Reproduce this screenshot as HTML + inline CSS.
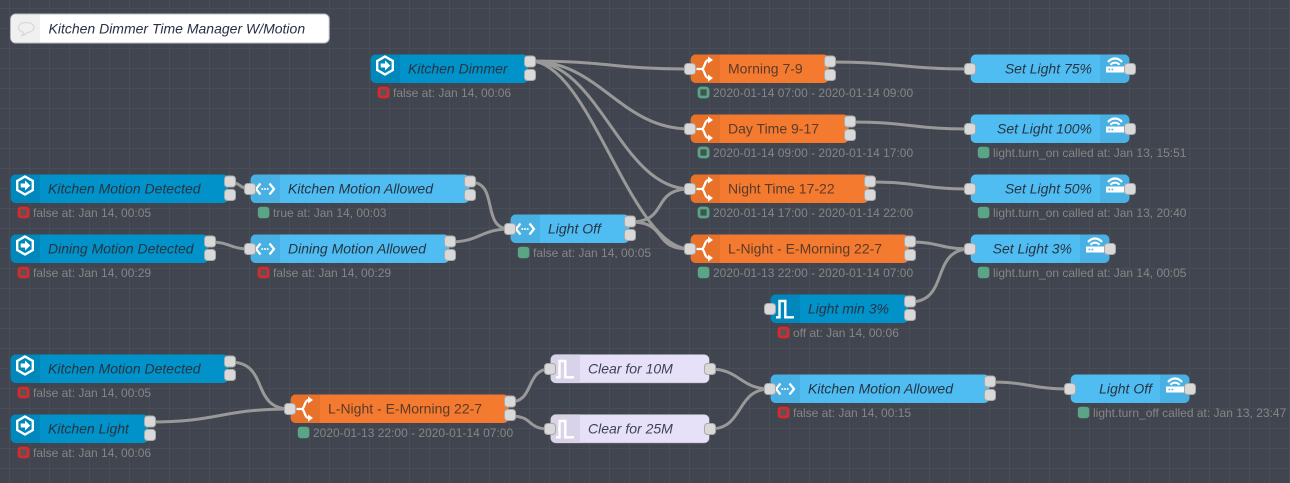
<!DOCTYPE html>
<html><head><meta charset="utf-8"><style>
html,body{margin:0;padding:0;background:#41454f;width:1290px;height:483px;overflow:hidden}
svg{display:block}
text{font-family:"Liberation Sans",Arial,sans-serif}
.l{font-size:14px;font-style:italic;fill:#263544}
.o{font-size:14px;fill:#5b3a2a}
.v{font-size:14px;font-style:italic;fill:#3f4358}
.s{font-size:12px;fill:#868686}
.w{fill:none;stroke:#999;stroke-width:3}
.db{fill:#0092c8}.dbs{fill:#0088bc}
.lb{fill:#4fbdf2}.lbs{fill:#49b0e3}
.or{fill:#f47a30}.ors{fill:#e8722a}
.la{fill:#e6e0f8}.las{fill:#d9d3ea}
</style></head><body>
<svg width="1290" height="483" viewBox="0 0 1290 483" xmlns="http://www.w3.org/2000/svg">
<defs>
<pattern id="g" x="9" y="8" width="20" height="20" patternUnits="userSpaceOnUse"><path d="M.5 0V20M0 .5H20" stroke="#494d58" fill="none"/></pattern>
<rect id="p" x="-5.500" y="-5.500" width="11" height="11" rx="3" fill="#d9d9d9" stroke="#aaa"/>
<path id="sl" d="M5.700 0H30V28.500H5.700a5 5 0 0 1-5-5V5a5 5 0 0 1 5-5z"/>
<path id="sr" d="M-30 0H-5.700a5 5 0 0 1 5 5V23.500a5 5 0 0 1-5 5H-30z"/>
<g id="trig"><path d="M15 2L22.800 6.500V15.500L15 20L7.200 15.500V6.500Z" fill="none" stroke="#fff" stroke-width="2.400"/><path d="M10.700 9H15V6L20.300 11L15 16V13H10.700Z" fill="#fff"/></g>
<g id="sw" fill="none" stroke="#fff" stroke-width="2.300"><path d="M6.500 14.500H11.500C15 14.500 14 5.500 19 5.500M11.500 14.500C15 14.500 14 23.500 19 23.500"/><path d="M18 2L23 5.500L18 9Z" fill="#fff" stroke="none"/><path d="M18 20L23 23.500L18 27Z" fill="#fff" stroke="none"/></g>
<g id="fn"><path d="M10.500 9L6 14.500L10.500 20M19.500 9L24 14.500L19.500 20" fill="none" stroke="#fff" stroke-width="2.200"/><circle cx="12.300" cy="14.500" r="1" fill="#fff"/><circle cx="15" cy="14.500" r="1" fill="#fff"/><circle cx="17.700" cy="14.500" r="1" fill="#fff"/></g>
<path id="bit" fill="none" stroke="#fff" stroke-width="2.400" d="M6 22.800H9.500V6.500H15.300V22.800H24"/>
<g id="sv"><path d="M-24 12h18v6h-18z" fill="#fff"/><path d="M-21.500 15h1.700M-18.500 15h1.700" stroke="#49b0e3" stroke-width="1.600"/><path d="M-22 7.500C-18 2.800 -12 2.800 -8 7.500M-19.500 10.300C-17 7.500 -13 7.500 -10.500 10.300" fill="none" stroke="#fff" stroke-width="2.200"/></g>
<rect id="rr" x="9" y="33.500" width="9" height="9" rx="2" fill="#555" stroke="#d8292d" stroke-width="2.800"/>
<rect id="gr" x="9" y="33.500" width="9" height="9" rx="2" fill="#41544f" stroke="#5aa585" stroke-width="2.800"/>
<rect id="gs" x="7.800" y="32.300" width="11.500" height="11.500" rx="3" fill="#5aa585"/>
</defs>
<rect width="1290" height="483" fill="#41454f"/>
<rect width="1290" height="483" fill="url(#g)"/>

<g class="w">
<path d="M530 61C610 61 610 69 690 69"/>
<path d="M530 61C600 61 620 129 690 129"/>
<path d="M530 61C600 61 620 189 690 189"/>
<path d="M530 61C590 61 630 249 690 249"/>
<path d="M230 182C240 182 240 189 250 189"/>
<path d="M210 242C230 242 230 249 250 249"/>
<path d="M470 182C500 182 480 229 510 229"/>
<path d="M450 242C480 242 480 229 510 229"/>
<path d="M630 222C670 222 650 189 690 189"/>
<path d="M630 222C670 222 650 249 690 249"/>
<path d="M830 62C900 62 900 69 970 69"/>
<path d="M850 122C910 122 910 129 970 129"/>
<path d="M870 182C920 182 920 189 970 189"/>
<path d="M910 242C940 242 940 249 970 249"/>
<path d="M910 302C950 302 930 249 970 249"/>
<path d="M230 362C270 362 250 409 290 409"/>
<path d="M150 422C220 422 220 409 290 409"/>
<path d="M510 402C535 402 525 369 550 369"/>
<path d="M510 416C535 416 525 429 550 429"/>
<path d="M710 369C740 369 740 389 770 389"/>
<path d="M710 429C745 429 735 389 770 389"/>
<path d="M990 382C1030 382 1030 389 1070 389"/>
</g>

<!-- comment -->
<g transform="translate(10,14)">
<rect x=".7" y="0" width="318.500" height="29" rx="5" fill="#fff" stroke="#b9bcc4"/>
<path d="M5.700 .5H30V28.500H5.700a5 5 0 0 1-5-5V5.500a5 5 0 0 1 5-5z" fill="#f0f0f0"/>
<path d="M15.500 8.500c5 0 8.500 2 8.500 5s-3.500 5-7 5c-1 1.500-3 2.700-5 3c1-1 1.500-2 1.500-3.300c-3-.7-5-2.500-5-4.700c0-3 3-5 7-5z" fill="none" stroke="#d9d9d9" stroke-width="1.300"/>
<text class="l" x="38.500" y="19.500" style="fill:#2a2f45">Kitchen Dimmer Time Manager W/Motion</text>
</g>

<!-- Kitchen Dimmer -->
<g transform="translate(370,54.500)"><rect class="db" x=".7" width="157.600" height="28.500" rx="5"/><use href="#sl" class="dbs"/><use href="#trig"/><text class="l" x="38" y="19">Kitchen Dimmer</text><use href="#p" x="160" y="7"/><use href="#p" x="160" y="20.500"/><use href="#rr"/><text class="s" x="23" y="42.500">false at: Jan 14, 00:06</text></g>
<!-- Morning -->
<g transform="translate(690,54.500)"><rect class="or" x=".7" width="138" height="28.500" rx="5"/><use href="#sl" class="ors"/><use href="#sw"/><text class="o" x="38" y="19">Morning 7-9</text><use href="#p" y="14.500"/><use href="#p" x="140" y="7"/><use href="#p" x="140" y="20.500"/><use href="#gr"/><text class="s" x="23" y="42.500">2020-01-14 07:00 - 2020-01-14 09:00</text></g>
<!-- Day -->
<g transform="translate(690,114.500)"><rect class="or" x=".7" width="158" height="28.500" rx="5"/><use href="#sl" class="ors"/><use href="#sw"/><text class="o" x="38" y="19">Day Time 9-17</text><use href="#p" y="14.500"/><use href="#p" x="160" y="7"/><use href="#p" x="160" y="20.500"/><use href="#gr"/><text class="s" x="23" y="42.500">2020-01-14 09:00 - 2020-01-14 17:00</text></g>
<!-- Night -->
<g transform="translate(690,174.500)"><rect class="or" x=".7" width="178" height="28.500" rx="5"/><use href="#sl" class="ors"/><use href="#sw"/><text class="o" x="38" y="19">Night Time 17-22</text><use href="#p" y="14.500"/><use href="#p" x="180" y="7"/><use href="#p" x="180" y="20.500"/><use href="#gr"/><text class="s" x="23" y="42.500">2020-01-14 17:00 - 2020-01-14 22:00</text></g>
<!-- L-Night -->
<g transform="translate(690,234.500)"><rect class="or" x=".7" width="218" height="28.500" rx="5"/><use href="#sl" class="ors"/><use href="#sw"/><text class="o" x="38" y="19">L-Night - E-Morning 22-7</text><use href="#p" y="14.500"/><use href="#p" x="220" y="7"/><use href="#p" x="220" y="20.500"/><use href="#gs"/><text class="s" x="23" y="42.500">2020-01-13 22:00 - 2020-01-14 07:00</text></g>

<!-- Set Light -->
<g transform="translate(970,54.500)"><rect class="lb" x=".7" width="158.600" height="28.500" rx="5"/><g transform="translate(160,0)"><use href="#sr" class="lbs"/><use href="#sv"/></g><text class="l" x="122" y="19" text-anchor="end">Set Light 75%</text><use href="#p" y="14.500"/><use href="#p" x="160" y="14.500"/></g>
<g transform="translate(970,114.500)"><rect class="lb" x=".7" width="158.600" height="28.500" rx="5"/><g transform="translate(160,0)"><use href="#sr" class="lbs"/><use href="#sv"/></g><text class="l" x="122" y="19" text-anchor="end">Set Light 100%</text><use href="#p" y="14.500"/><use href="#p" x="160" y="14.500"/><use href="#gs"/><text class="s" x="23" y="42.500">light.turn_on called at: Jan 13, 15:51</text></g>
<g transform="translate(970,174.500)"><rect class="lb" x=".7" width="158.600" height="28.500" rx="5"/><g transform="translate(160,0)"><use href="#sr" class="lbs"/><use href="#sv"/></g><text class="l" x="122" y="19" text-anchor="end">Set Light 50%</text><use href="#p" y="14.500"/><use href="#p" x="160" y="14.500"/><use href="#gs"/><text class="s" x="23" y="42.500">light.turn_on called at: Jan 13, 20:40</text></g>
<g transform="translate(970,234.500)"><rect class="lb" x=".7" width="138.600" height="28.500" rx="5"/><g transform="translate(140,0)"><use href="#sr" class="lbs"/><use href="#sv"/></g><text class="l" x="102" y="19" text-anchor="end">Set Light 3%</text><use href="#p" y="14.500"/><use href="#p" x="140" y="14.500"/><use href="#gs"/><text class="s" x="23" y="42.500">light.turn_on called at: Jan 14, 00:05</text></g>

<!-- Light min -->
<g transform="translate(770,294.500)"><rect class="db" x=".7" width="137.600" height="28.500" rx="5"/><use href="#sl" class="dbs"/><use href="#bit"/><text class="l" x="38" y="19">Light min 3%</text><use href="#p" y="14.500"/><use href="#p" x="140" y="7"/><use href="#p" x="140" y="20.500"/><use href="#rr"/><text class="s" x="23" y="42.500">off at: Jan 14, 00:06</text></g>

<!-- Left rows -->
<g transform="translate(10,174.500)"><rect class="db" x=".7" width="217.600" height="28.500" rx="5"/><use href="#sl" class="dbs"/><use href="#trig"/><text class="l" x="38" y="19">Kitchen Motion Detected</text><use href="#p" x="220" y="7"/><use href="#p" x="220" y="20.500"/><use href="#rr"/><text class="s" x="23" y="42.500">false at: Jan 14, 00:05</text></g>
<g transform="translate(10,234.500)"><rect class="db" x=".7" width="197.600" height="28.500" rx="5"/><use href="#sl" class="dbs"/><use href="#trig"/><text class="l" x="38" y="19">Dining Motion Detected</text><use href="#p" x="200" y="7"/><use href="#p" x="200" y="20.500"/><use href="#rr"/><text class="s" x="23" y="42.500">false at: Jan 14, 00:29</text></g>
<g transform="translate(250,174.500)"><rect class="lb" x=".7" width="218.600" height="28.500" rx="5"/><use href="#sl" class="lbs"/><use href="#fn"/><text class="l" x="38" y="19">Kitchen Motion Allowed</text><use href="#p" y="14.500"/><use href="#p" x="220" y="7"/><use href="#p" x="220" y="20.500"/><use href="#gs"/><text class="s" x="23" y="42.500">true at: Jan 14, 00:03</text></g>
<g transform="translate(250,234.500)"><rect class="lb" x=".7" width="198.600" height="28.500" rx="5"/><use href="#sl" class="lbs"/><use href="#fn"/><text class="l" x="38" y="19">Dining Motion Allowed</text><use href="#p" y="14.500"/><use href="#p" x="200" y="7"/><use href="#p" x="200" y="20.500"/><use href="#rr"/><text class="s" x="23" y="42.500">false at: Jan 14, 00:29</text></g>
<g transform="translate(510,214.500)"><rect class="lb" x=".7" width="118.600" height="28.500" rx="5"/><use href="#sl" class="lbs"/><use href="#fn"/><text class="l" x="38" y="19">Light Off</text><use href="#p" y="14.500"/><use href="#p" x="120" y="7"/><use href="#p" x="120" y="20.500"/><use href="#gs"/><text class="s" x="23" y="42.500">false at: Jan 14, 00:05</text></g>

<!-- Bottom -->
<g transform="translate(10,354.500)"><rect class="db" x=".7" width="217.600" height="28.500" rx="5"/><use href="#sl" class="dbs"/><use href="#trig"/><text class="l" x="38" y="19">Kitchen Motion Detected</text><use href="#p" x="220" y="7"/><use href="#p" x="220" y="20.500"/><use href="#rr"/><text class="s" x="23" y="42.500">false at: Jan 14, 00:05</text></g>
<g transform="translate(10,414.500)"><rect class="db" x=".7" width="137.600" height="28.500" rx="5"/><use href="#sl" class="dbs"/><use href="#trig"/><text class="l" x="38" y="19">Kitchen Light</text><use href="#p" x="140" y="7"/><use href="#p" x="140" y="20.500"/><use href="#rr"/><text class="s" x="23" y="42.500">false at: Jan 14, 00:06</text></g>
<g transform="translate(290,394.500)"><rect class="or" x=".7" width="218" height="28.500" rx="5"/><use href="#sl" class="ors"/><use href="#sw"/><text class="o" x="38" y="19">L-Night - E-Morning 22-7</text><use href="#p" y="14.500"/><use href="#p" x="220" y="7"/><use href="#p" x="220" y="20.500"/><use href="#gs"/><text class="s" x="23" y="42.500">2020-01-13 22:00 - 2020-01-14 07:00</text></g>
<g transform="translate(550,354.500)"><rect class="la" x=".7" width="158.600" height="28.500" rx="5" stroke="#999" stroke-width=".5"/><use href="#sl" class="las"/><use href="#bit"/><text class="v" x="38" y="19">Clear for 10M</text><use href="#p" y="14.500"/><use href="#p" x="160" y="14.500"/></g>
<g transform="translate(550,414.500)"><rect class="la" x=".7" width="158.600" height="28.500" rx="5" stroke="#999" stroke-width=".5"/><use href="#sl" class="las"/><use href="#bit"/><text class="v" x="38" y="19">Clear for 25M</text><use href="#p" y="14.500"/><use href="#p" x="160" y="14.500"/></g>
<g transform="translate(770,374.500)"><rect class="lb" x=".7" width="218.600" height="28.500" rx="5"/><use href="#sl" class="lbs"/><use href="#fn"/><text class="l" x="38" y="19">Kitchen Motion Allowed</text><use href="#p" y="14.500"/><use href="#p" x="220" y="7"/><use href="#p" x="220" y="20.500"/><use href="#rr"/><text class="s" x="23" y="42.500">false at: Jan 14, 00:15</text></g>
<g transform="translate(1070,374.500)"><rect class="lb" x=".7" width="118.600" height="28.500" rx="5"/><g transform="translate(120,0)"><use href="#sr" class="lbs"/><use href="#sv"/></g><text class="l" x="82" y="19" text-anchor="end">Light Off</text><use href="#p" y="14.500"/><use href="#p" x="120" y="14.500"/><use href="#gs"/><text class="s" x="23" y="42.500">light.turn_off called at: Jan 13, 23:47</text></g>
</svg>
</body></html>
